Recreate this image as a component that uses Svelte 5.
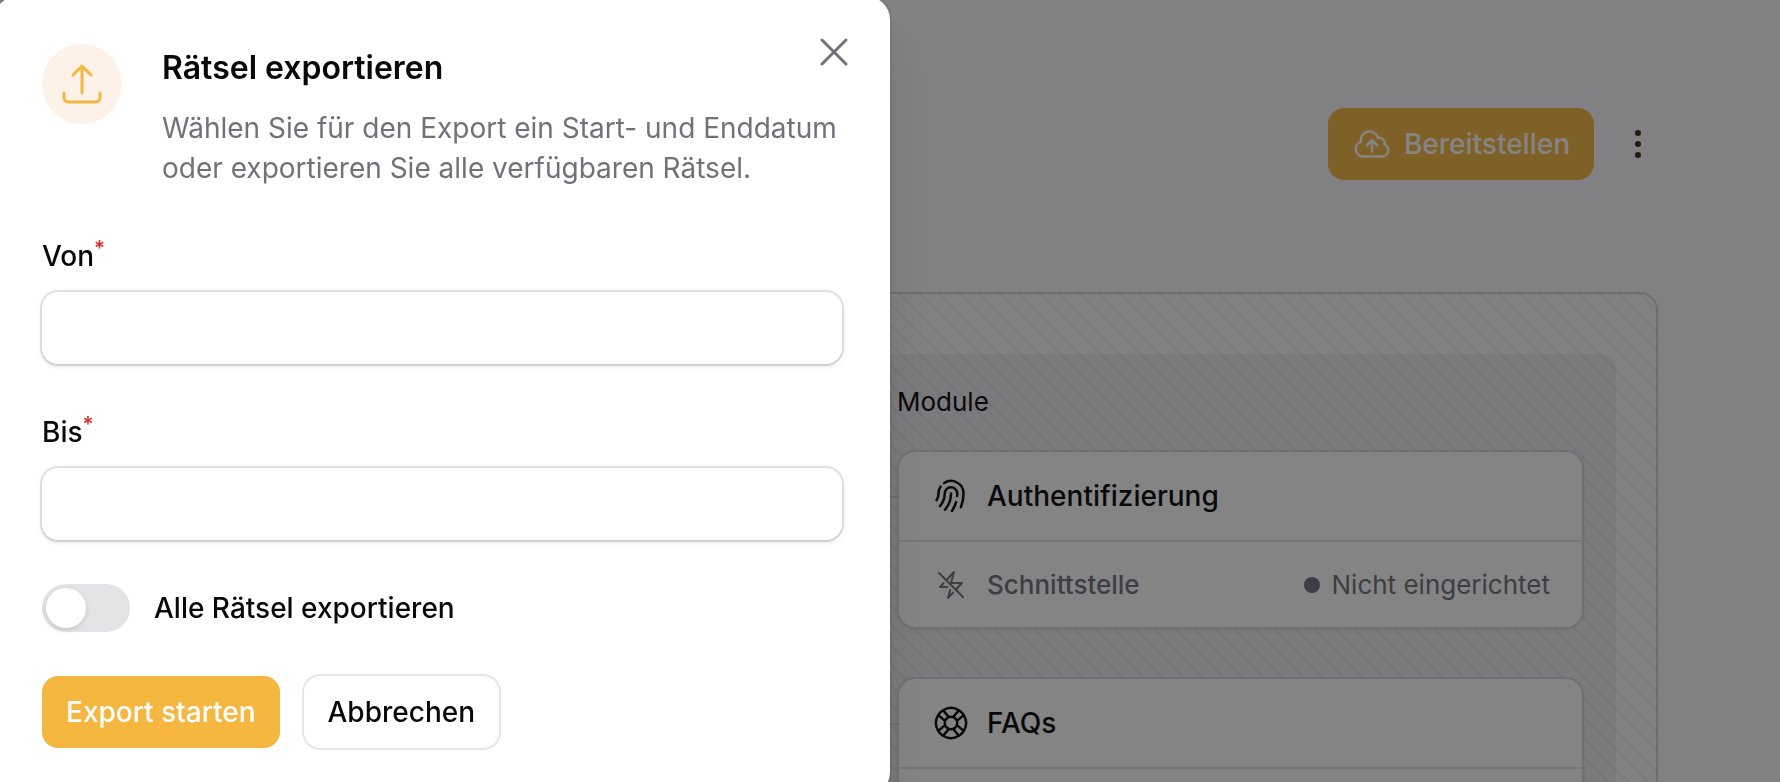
<script lang="ts">
	let open = $state(true);
	let from = $state('');
	let to = $state('');
	let exportAll = $state(false);

	const icons = {
		upload:
			'M3 16.5v2.25A2.25 2.25 0 0 0 5.25 21h13.5A2.25 2.25 0 0 0 21 18.75V16.5m-13.5-9L12 3m0 0 4.5 4.5M12 3v13.5',
		close: 'M6 18 18 6M6 6l12 12',
		cloud:
			'M12 16.5V9.75m0 0 3 3m-3-3-3 3M6.75 19.5a4.5 4.5 0 0 1-1.41-8.775 5.25 5.25 0 0 1 10.233-2.33 3 3 0 0 1 3.758 3.848A3.752 3.752 0 0 1 18 19.5H6.75Z',
		fingerprint:
			'M7.864 4.243A7.5 7.5 0 0 1 19.5 10.5c0 2.92-.556 5.709-1.568 8.268M5.742 6.364A7.465 7.465 0 0 0 4.5 10.5a7.464 7.464 0 0 1-1.15 3.993m1.989 3.559A11.209 11.209 0 0 0 8.25 10.5a3.75 3.75 0 1 1 7.5 0c0 .527-.021 1.049-.064 1.565M12 10.5a14.94 14.94 0 0 1-3.6 9.75m6.633-4.596a18.666 18.666 0 0 1-2.485 5.33',
		boltSlash:
			'M11.412 15.655 9.75 21.75l3.745-4.012M9.257 13.5H3.75l2.659-2.849m2.048-2.194L14.25 2.25 12 10.5h8.25l-4.707 5.043M8.457 8.457 3 3m5.457 5.457 7.086 7.086m0 0L21 21',
		lifebuoy:
			'M16.712 4.33a9.027 9.027 0 0 1 1.652 1.306c.51.51.944 1.064 1.306 1.652M16.712 4.33l-3.448 4.138m3.448-4.138a9.014 9.014 0 0 0-9.424 0M19.67 7.288l-4.138 3.448m4.138-3.448a9.014 9.014 0 0 1 0 9.424m-4.138-5.976a3.736 3.736 0 0 0-.88-1.388 3.737 3.737 0 0 0-1.388-.88m2.268 2.268a3.765 3.765 0 0 1 0 2.528m-2.268-4.796a3.765 3.765 0 0 0-2.528 0m4.796 4.796c-.181.506-.475.982-.88 1.388a3.736 3.736 0 0 1-1.388.88m2.268-2.268 4.138 3.448m0 0a9.027 9.027 0 0 1-1.306 1.652c-.51.51-1.064.944-1.652 1.306m0 0-3.448-4.138m3.448 4.138a9.014 9.014 0 0 1-9.424 0m5.976-4.138a3.765 3.765 0 0 1-2.528 0m0 0a3.736 3.736 0 0 1-1.388-.88 3.737 3.737 0 0 1-.88-1.388m2.268 2.268L7.288 19.67m0 0a9.024 9.024 0 0 1-1.652-1.306 9.027 9.027 0 0 1-1.306-1.652m0 0 4.138-3.448M4.33 16.712a9.014 9.014 0 0 1 0-9.424m4.138 5.976a3.765 3.765 0 0 1 0-2.528m0 0c.181-.506.475-.982.88-1.388a3.736 3.736 0 0 1 1.388-.88m-2.268 2.268L4.33 7.288m6.406 1.18L7.288 4.33m0 0a9.024 9.024 0 0 0-1.652 1.306A9.025 9.025 0 0 0 4.33 7.288'
	};

	const modules = [
		{
			name: 'Authentifizierung',
			icon: icons.fingerprint,
			connection: { label: 'Schnittstelle', status: 'Nicht eingerichtet' }
		},
		{ name: 'FAQs', icon: icons.lifebuoy, connection: null }
	];

	function submit(event: SubmitEvent) {
		event.preventDefault();
		open = false;
	}
</script>

{#snippet icon(path: string, size: string)}
	<svg class="icon {size}" viewBox="0 0 24 24" fill="none" stroke="currentColor" stroke-width="1.5" stroke-linecap="round" stroke-linejoin="round" aria-hidden="true">
		<path d={path} />
	</svg>
{/snippet}

<main class="page">
	<div class="toolbar">
		<button type="button" class="btn btn-primary">
			{@render icon(icons.cloud, 'icon-md')}
			Bereitstellen
		</button>
		<button type="button" class="btn-plain btn-more">
			<svg class="icon icon-md" viewBox="0 0 20 20" fill="currentColor" aria-hidden="true">
				<circle cx="10" cy="4.5" r="1.5" />
				<circle cx="10" cy="10" r="1.5" />
				<circle cx="10" cy="15.5" r="1.5" />
			</svg>
		</button>
	</div>

	<section class="board">
		<div class="board-panel">
			<div class="modules">
				<h2 class="modules-title">Module</h2>
				{#each modules as module}
					<article class="card">
						<div class="card-head">
							{@render icon(module.icon, 'icon-md')}
							<h3>{module.name}</h3>
						</div>
						<div class="card-row">
							{#if module.connection}
								<span class="row-icon">{@render icon(icons.boltSlash, 'icon-sm')}</span>
								<span class="row-label">{module.connection.label}</span>
								<span class="status">
									<span class="status-dot"></span>
									{module.connection.status}
								</span>
							{/if}
						</div>
					</article>
				{/each}
			</div>
		</div>
	</section>
</main>

{#if open}
	<div class="backdrop">
		<form class="dialog" role="dialog" aria-labelledby="dialog-title" onsubmit={submit}>
			<button type="button" class="btn-plain btn-close" onclick={() => (open = false)}>
				{@render icon(icons.close, 'icon-lg')}
			</button>

			<header class="dialog-head">
				<div class="dialog-icon">{@render icon(icons.upload, 'icon-lg')}</div>
				<div>
					<h1 id="dialog-title">Rätsel exportieren</h1>
					<p>Wählen Sie für den Export ein Start- und Enddatum oder exportieren Sie alle verfügbaren Rätsel.</p>
				</div>
			</header>

			<div class="field">
				<label for="from">Von<sup>*</sup></label>
				<input id="from" class="text-input" type="text" required bind:value={from} />
			</div>

			<div class="field">
				<label for="to">Bis<sup>*</sup></label>
				<input id="to" class="text-input" type="text" required bind:value={to} />
			</div>

			<div class="toggle-row">
				<input id="export-all" class="toggle" type="checkbox" role="switch" bind:checked={exportAll} />
				<label for="export-all">Alle Rätsel exportieren</label>
			</div>

			<footer class="actions">
				<button type="submit" class="btn btn-primary">Export starten</button>
				<button type="button" class="btn btn-outline" onclick={() => (open = false)}>Abbrechen</button>
			</footer>
		</form>
	</div>
{/if}

<style>
	:global(body) {
		--primary: #f5b740;
		--ink: #09090b;
		--muted: #71717a;
		--ring: rgba(9, 9, 11, 0.1);
		--shadow: 0 2px 6px rgba(0, 0, 0, 0.1), 0 2px 4px -2px rgba(0, 0, 0, 0.1);
		background: #f9f9fb;
		color: var(--ink);
		font-family: Inter, 'Liberation Sans', sans-serif;
		font-size: 28px;
		line-height: 40px;
		-webkit-font-smoothing: antialiased;
	}

	h1,
	h2,
	h3,
	p {
		margin: 0;
	}

	/* Icons */
	.icon {
		display: block;
		flex-shrink: 0;
	}

	.icon-sm {
		width: 32px;
		height: 32px;
	}

	.icon-md {
		width: 40px;
		height: 40px;
	}

	.icon-lg {
		width: 48px;
		height: 48px;
	}

	/* Buttons */
	.btn,
	.btn-plain {
		border: 0;
		font: inherit;
		cursor: pointer;
	}

	.btn {
		display: inline-flex;
		align-items: center;
		gap: 12px;
		padding: 16px 24px;
		border-radius: 16px;
		font-weight: 500;
		white-space: nowrap;
	}

	.btn-primary {
		background: var(--primary);
		color: #fff;
	}

	.btn-outline {
		background: #fff;
		color: var(--ink);
		box-shadow: 0 0 0 2px var(--ring);
	}

	.btn-plain {
		padding: 0;
		background: none;
	}

	/* Page */
	.page {
		box-sizing: border-box;
		height: 100vh;
		padding: 108px 122px 0;
		overflow: hidden;
	}

	.toolbar {
		display: flex;
		align-items: center;
		justify-content: flex-end;
		gap: 24px;
		margin-bottom: 112px;
	}

	.btn-more {
		color: #412b0d;
	}

	.board {
		--stripe: rgba(9, 9, 11, 0.05);
		padding: 60px 40px;
		border: 2px solid rgba(9, 9, 11, 0.15);
		border-radius: 18px;
		background-image: linear-gradient(
			45deg,
			var(--stripe) 3%,
			transparent 3% 47%,
			var(--stripe) 47% 53%,
			transparent 53% 97%,
			var(--stripe) 97%
		);
		background-size: 20px 20px;
		background-position: 16px 0;
	}

	.board-panel {
		display: grid;
		grid-template-columns: 1fr 1fr;
		column-gap: 14px;
		padding: 32px;
		border-radius: 16px;
		background: rgba(9, 9, 11, 0.05);
	}

	.modules {
		grid-column: 2;
		display: flex;
		flex-direction: column;
		gap: 48px;
	}

	.modules-title {
		margin-bottom: -16px;
		font-size: 26px;
		font-weight: 400;
		line-height: 32px;
	}

	.card {
		position: relative;
		border: 2px solid #d6d6d8;
		border-radius: 18px;
		background: #fff;
		box-shadow: 0 2px 4px rgba(0, 0, 0, 0.05);
	}

	/* connector line towards the app node */
	.card::before {
		content: '';
		position: absolute;
		top: 44px;
		right: 100%;
		width: 40px;
		height: 2px;
		background: rgba(9, 9, 11, 0.1);
	}

	.card-head,
	.card-row {
		display: flex;
		align-items: center;
		gap: 16px;
		padding: 24px 32px;
	}

	.card-head h3 {
		font-size: 28px;
		font-weight: 500;
	}

	.card-row {
		min-height: 37px;
		border-top: 2px solid #e4e4e7;
		color: var(--muted);
		font-size: 26px;
		line-height: 36px;
	}

	.row-icon {
		padding: 0 4px;
	}

	.row-label {
		font-weight: 500;
	}

	.status {
		display: flex;
		align-items: center;
		gap: 12px;
		margin-left: auto;
	}

	.status-dot {
		width: 16px;
		height: 16px;
		border-radius: 50%;
		background: var(--muted);
	}

	/* Dialog */
	.backdrop {
		position: fixed;
		inset: 0;
		display: flex;
		align-items: flex-start;
		overflow: hidden;
		background: rgba(9, 9, 11, 0.5);
	}

	.dialog {
		position: relative;
		box-sizing: border-box;
		width: 100%;
		max-width: 896px;
		margin: -4px 0 0 -6px;
		padding: 48px;
		display: flex;
		flex-direction: column;
		gap: 48px;
		border-radius: 24px;
		background: #fff;
		box-shadow: 0 40px 50px -10px rgba(0, 0, 0, 0.1), 0 16px 20px -12px rgba(0, 0, 0, 0.1), 0 0 0 2px rgba(9, 9, 11, 0.05);
	}

	.btn-close {
		position: absolute;
		top: 32px;
		right: 32px;
		color: var(--muted);
	}

	.dialog-head {
		display: flex;
		align-items: flex-start;
		gap: 40px;
	}

	.dialog-icon {
		padding: 16px;
		border-radius: 50%;
		background: #fdf2e8;
		color: var(--primary);
	}

	.dialog-head h1 {
		margin-bottom: 16px;
		font-size: 32px;
		font-weight: 600;
		line-height: 48px;
	}

	.dialog-head p {
		color: var(--muted);
	}

	.field {
		display: flex;
		flex-direction: column;
		gap: 16px;
	}

	.field label,
	.toggle-row label {
		font-weight: 500;
	}

	.field sup {
		color: #dc2626;
		font-size: 21px;
		line-height: 0;
		vertical-align: 10px;
	}

	.text-input {
		box-sizing: border-box;
		width: 100%;
		height: 72px;
		padding: 12px 24px;
		border: 0;
		border-radius: 16px;
		outline: 0;
		background: #fff;
		box-shadow: 0 0 0 2px var(--ring), var(--shadow);
		color: inherit;
		font: inherit;
	}

	.toggle-row {
		display: flex;
		align-items: center;
		gap: 24px;
		height: 40px;
	}

	.toggle {
		appearance: none;
		flex-shrink: 0;
		box-sizing: border-box;
		width: 88px;
		height: 48px;
		margin: 0;
		padding: 4px;
		border-radius: 24px;
		background: #e4e4e7;
		cursor: pointer;
	}

	.toggle::before {
		content: '';
		display: block;
		width: 40px;
		height: 40px;
		border-radius: 50%;
		background: #fff;
		box-shadow: var(--shadow);
		transition: transform 0.2s ease;
	}

	.toggle:checked {
		background: var(--primary);
	}

	.toggle:checked::before {
		transform: translateX(40px);
	}

	.actions {
		display: flex;
		gap: 24px;
	}
</style>
